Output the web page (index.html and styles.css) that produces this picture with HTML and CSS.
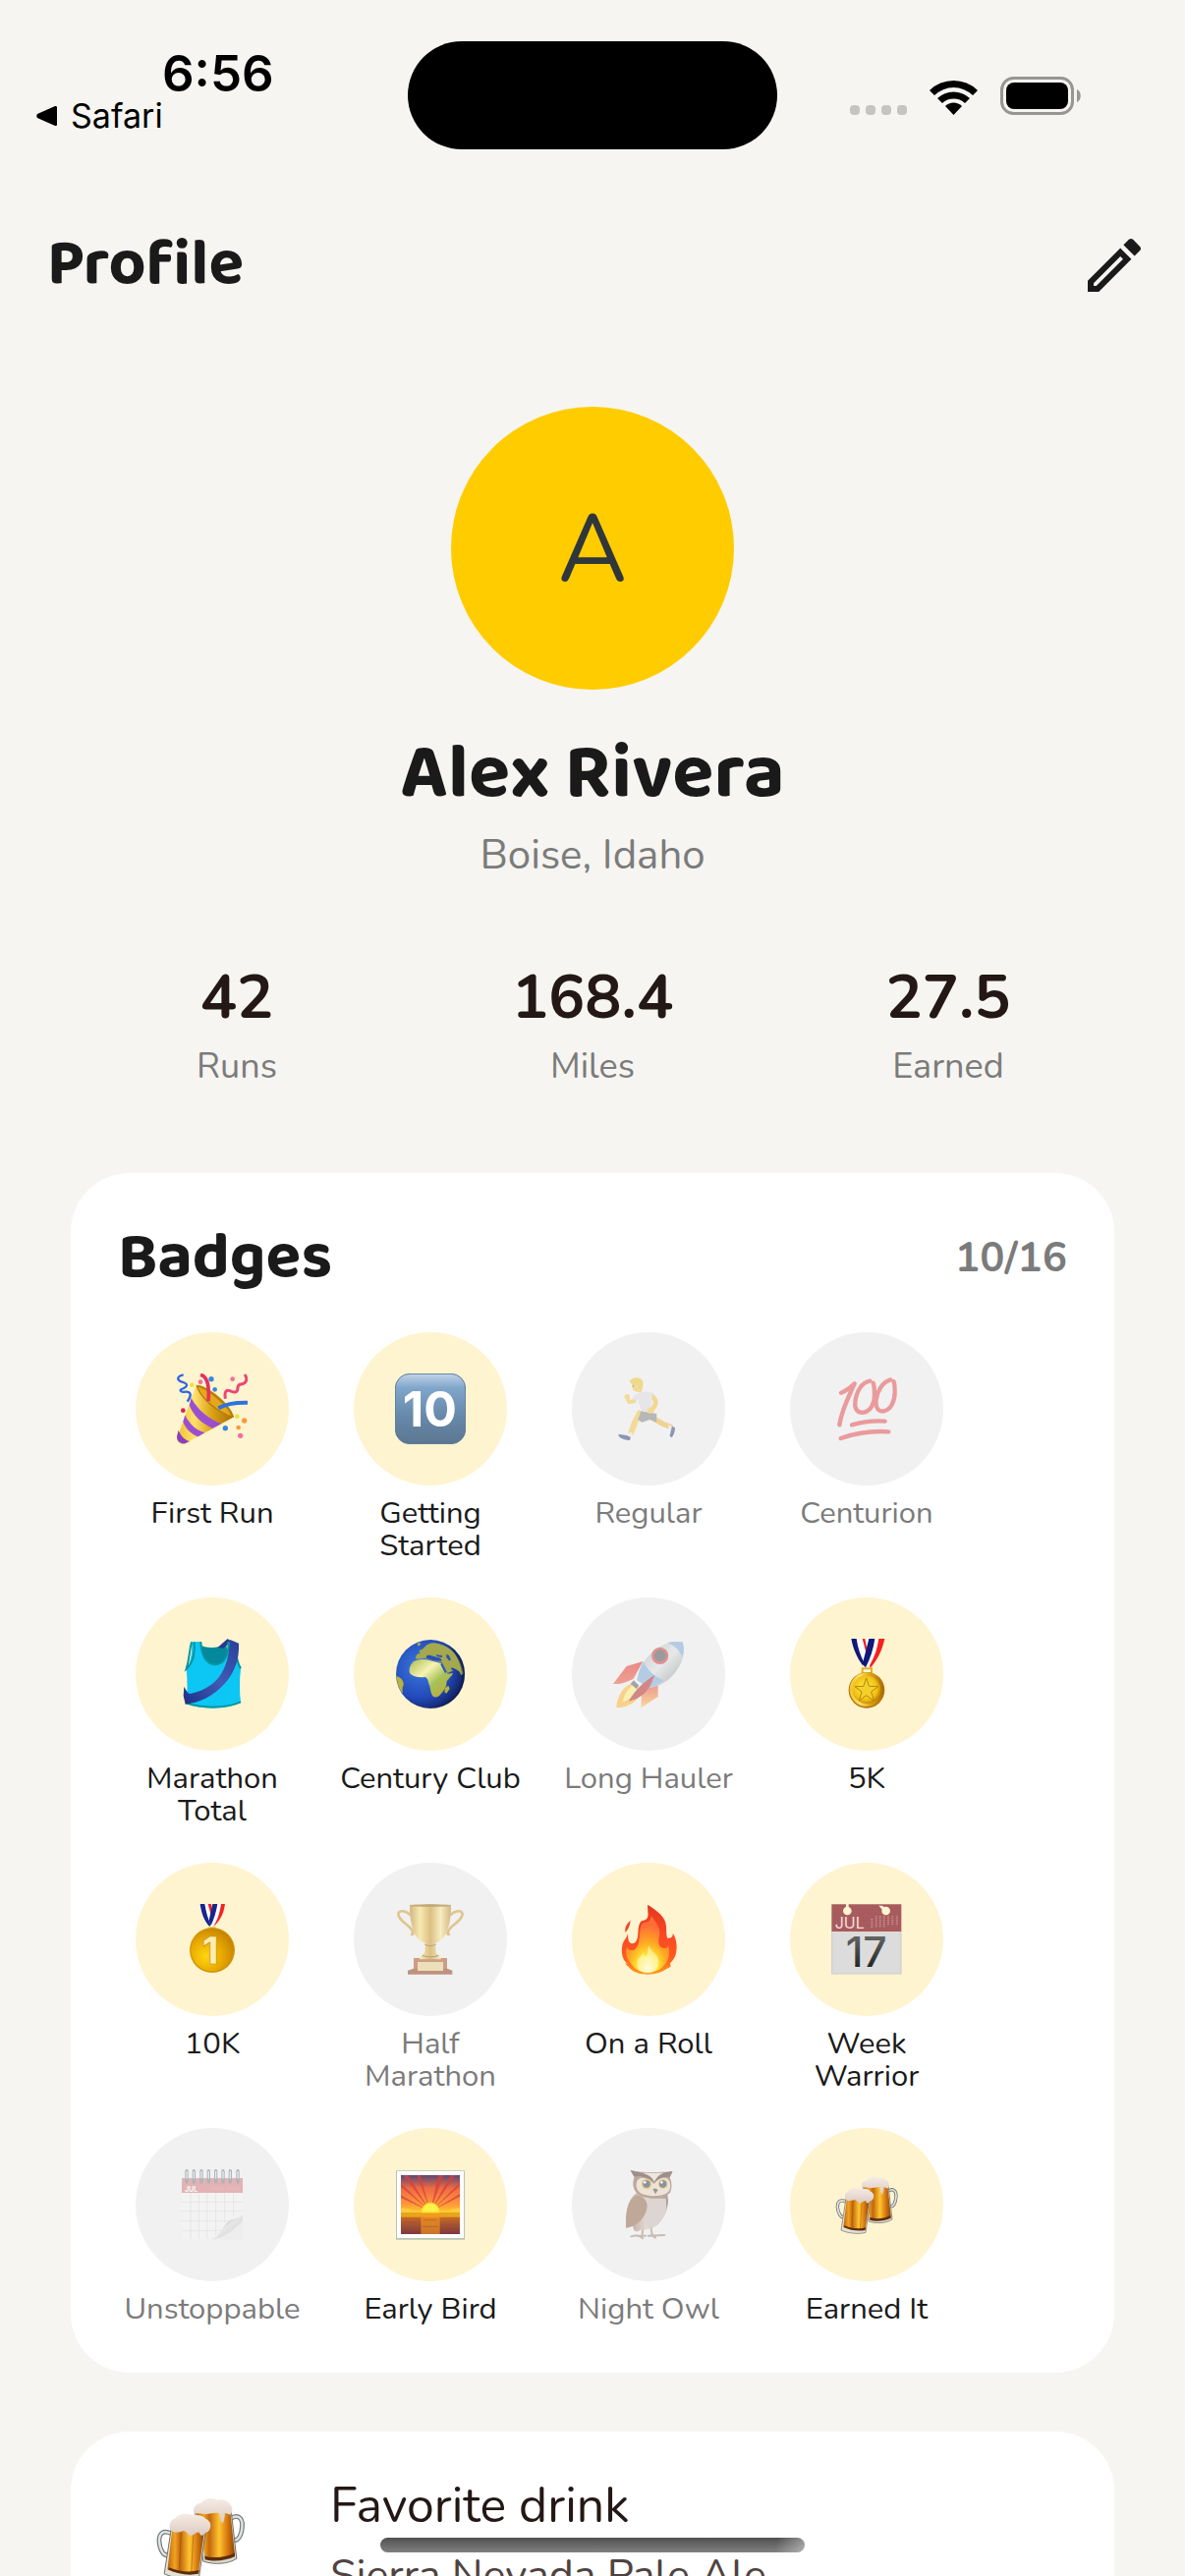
FILE: index.html
```html
<!DOCTYPE html>
<html lang="en">
<head>
<meta charset="utf-8">
<meta name="viewport" content="width=device-width, initial-scale=1">
<title>Profile</title>
<link rel="stylesheet" href="styles.css">
</head>
<body>
<svg class="sprite" width="0" height="0" aria-hidden="true">
  <defs>
    <linearGradient id="gold" x1="0" y1="0" x2="1" y2="0">
      <stop offset="0" stop-color="#f0c22c"/><stop offset=".3" stop-color="#ffe070"/><stop offset=".6" stop-color="#dca416"/><stop offset="1" stop-color="#a86c05"/>
    </linearGradient>
    <linearGradient id="cup" x1="0" y1="0" x2="1" y2="0">
      <stop offset="0" stop-color="#b8800d"/><stop offset=".25" stop-color="#ffe27a"/><stop offset=".5" stop-color="#c98f14"/><stop offset=".75" stop-color="#ffe893"/><stop offset="1" stop-color="#b57f12"/>
    </linearGradient>
    <linearGradient id="keycap" x1="0" y1="0" x2="0" y2="1">
      <stop offset="0" stop-color="#c0d4e8"/><stop offset=".2" stop-color="#80a6cb"/><stop offset=".6" stop-color="#6789aa"/><stop offset="1" stop-color="#5c7690"/>
    </linearGradient>
    <linearGradient id="beer" x1="0" y1="0" x2="1" y2="0">
      <stop offset="0" stop-color="#b86410"/><stop offset=".2" stop-color="#f2a41f"/><stop offset=".35" stop-color="#c3680e"/><stop offset=".6" stop-color="#ffc531"/><stop offset=".8" stop-color="#d97c10"/><stop offset="1" stop-color="#8e4507"/>
    </linearGradient>
    <linearGradient id="foam" x1="0" y1="0" x2="0" y2="1">
      <stop offset="0" stop-color="#f6ebe4"/><stop offset="1" stop-color="#dccbc1"/>
    </linearGradient>
    <radialGradient id="sea" cx=".35" cy=".4" r=".7">
      <stop offset="0" stop-color="#3c78e0"/><stop offset=".65" stop-color="#2249b8"/><stop offset="1" stop-color="#0d1a50"/>
    </radialGradient>
    <linearGradient id="land" x1="0" y1="0" x2="1" y2="1">
      <stop offset="0" stop-color="#a9bb4e"/><stop offset=".35" stop-color="#f7f4b4"/><stop offset=".6" stop-color="#a5c155"/><stop offset="1" stop-color="#c9a43a"/>
    </linearGradient>
    <radialGradient id="coin" cx=".35" cy=".65" r=".7">
      <stop offset="0" stop-color="#ffd60f"/><stop offset=".55" stop-color="#e9a900"/><stop offset="1" stop-color="#c58400"/>
    </radialGradient>
    <radialGradient id="star-coin" cx=".45" cy=".45" r=".6">
      <stop offset="0" stop-color="#fff04a"/><stop offset=".7" stop-color="#f0c213"/><stop offset="1" stop-color="#b97800"/>
    </radialGradient>
    <linearGradient id="flame" x1="0" y1="0" x2="0" y2="1">
      <stop offset="0" stop-color="#e5381c"/><stop offset=".5" stop-color="#fb4a26"/><stop offset=".75" stop-color="#ff5a1c"/><stop offset="1" stop-color="#ff9a20"/>
    </linearGradient>
    <radialGradient id="flame-core" cx=".5" cy=".92" r=".75">
      <stop offset="0" stop-color="#fffbd8"/><stop offset=".3" stop-color="#ffe92e"/><stop offset=".6" stop-color="#ffa824"/><stop offset="1" stop-color="#ff6c36"/>
    </radialGradient>
    <linearGradient id="sash" x1="0" y1="1" x2="1" y2="0">
      <stop offset="0" stop-color="#1e2f86"/><stop offset=".5" stop-color="#3f5bb5"/><stop offset="1" stop-color="#2a409b"/>
    </linearGradient>
    <linearGradient id="sky" x1="0" y1="0" x2="0" y2="1">
      <stop offset="0" stop-color="#5a4874"/><stop offset=".22" stop-color="#ee6a43"/><stop offset=".5" stop-color="#ff9a3a"/><stop offset=".62" stop-color="#ffc42a"/><stop offset=".66" stop-color="#d5721f"/><stop offset="1" stop-color="#7c3840"/>
    </linearGradient>
    <linearGradient id="hull" x1="0" y1="0" x2="1" y2="1">
      <stop offset="0" stop-color="#8f989d"/><stop offset=".5" stop-color="#dfe3e3"/><stop offset="1" stop-color="#6c7478"/>
    </linearGradient>
    <linearGradient id="fin" x1="0" y1="0" x2="0" y2="1">
      <stop offset="0" stop-color="#e5241f"/><stop offset=".6" stop-color="#ee5a3a"/><stop offset="1" stop-color="#ffc24a"/>
    </linearGradient>
    <linearGradient id="page-curl" x1="0" y1="0" x2="1" y2="1">
      <stop offset=".2" stop-color="#666"/><stop offset=".5" stop-color="#ddd"/><stop offset="1" stop-color="#aaa"/>
    </linearGradient>
    <linearGradient id="owl-body" x1="0" y1="0" x2="1" y2="0">
      <stop offset="0" stop-color="#7a5340"/><stop offset=".5" stop-color="#d9c6b8"/><stop offset="1" stop-color="#6d4a3a"/>
    </linearGradient>
    <linearGradient id="digit" x1="0" y1="0" x2="0" y2="1">
      <stop offset="0" stop-color="#777"/><stop offset="1" stop-color="#111"/>
    </linearGradient>
  </defs>
  <symbol id="beers" viewBox="891 171 216 216">
    <path d="M1064 238c14-10 26-3 25 16-1 18-8 34-20 30" fill="none" stroke="#737879" stroke-width="10"/>
    <path d="M1064 238c14-10 26-3 25 16-1 18-8 34-20 30" fill="none" stroke="#e0e4e4" stroke-width="5"/>
    <path d="M987 222l78-2 12 104c-18 12-48 14-72 6z" fill="#d9d7cf" stroke="#6e6a60" stroke-width="2"/>
    <path d="M989 222l74-2 10 94c-18 9-42 10-64 6z" fill="url(#beer)"/>
    <path d="M1008 318c20 6 46 4 65-6v8c-18 8-44 12-64 6z" fill="#5c2d08"/>
    <path d="M985 226c-4-14 6-20 16-22 8-12 26-12 34-6 14-3 24 2 28 10 6 4 6 12 2 20-7 2-8-2-13-2-1 8-2 20-6 22-5-2-4-14-7-22-10-2-20 2-28 2z" fill="url(#foam)"/>
    <path d="M936 270c-16-8-26-2-26 16 1 18 10 36 22 29" fill="none" stroke="#737879" stroke-width="10"/>
    <path d="M936 270c-16-8-26-2-26 16 1 18 10 36 22 29" fill="none" stroke="#e0e4e4" stroke-width="5"/>
    <path d="M936 260l74 6-14 98c-20 6-54 3-75-7z" fill="#e3e0d8" stroke="#6e6a60" stroke-width="2"/>
    <path d="M938 262l69 6-12 86c-19 6-48 2-67-6z" fill="url(#beer)"/>
    <path d="M958 268l-5 80M984 270l-5 86" stroke="#8e4507" stroke-width="2" opacity=".5"/>
    <path d="M930 348c20 10 44 13 65 9l1-8c-20 6-46 2-65-6z" fill="#5c2d08"/>
    <path d="M935 262c-6-10 0-22 10-25 8-12 30-11 38-6 14-2 24 2 28 8 10 4 12 14 8 22-4 8-10 6-12 10-5 6-9 4-11-4-8 0-12 8-18 8-6-2-8-10-16-11-10 4-22 6-27-2z" fill="url(#foam)"/>
  </symbol>
</svg>

<div class="app">
  <div class="status">
    <div class="status-left">
      <time class="clock">6:56</time>
      <a class="back" href="#">
        <svg class="back-arrow" viewBox="0 0 22 22" aria-hidden="true"><path d="M21 2v18c0 1-1 1-2 1L1 13c-1-1-1-3 0-4L19 1c1 0 2 0 2 1z"/></svg>
        Safari</a>
    </div>
    <div class="island"></div>
    <div class="status-right">
      <span class="dots"><i></i><i></i><i></i><i></i></span>
      <svg class="wifi" viewBox="0 0 51 37" aria-hidden="true">
        <path d="M1 12a35 35 0 0 1 49 0l-5 5a28 28 0 0 0-39 0z"/>
        <path d="M9 20a24 24 0 0 1 33 0l-5 5a17 17 0 0 0-23 0z"/>
        <path d="M17 28a12 12 0 0 1 17 0l-8.500 9z"/>
      </svg>
      <svg class="battery" viewBox="0 0 82 39" aria-hidden="true">
        <rect x="1.500" y="1.500" width="72" height="36" rx="12" fill="none" stroke="#979693" stroke-width="3"/>
        <rect x="6" y="6" width="63" height="27" rx="8"/>
        <path d="M78 13c5 2 5 11 0 13z" fill="#979693"/>
      </svg>
    </div>
  </div>

  <header class="appbar">
    <h1 class="title">Profile</h1>
    <button class="edit" type="button" aria-label="Edit profile">
      <svg viewBox="0 0 24 24" aria-hidden="true"><path d="M14.060 9.020l.92.92L5.920 19H5v-.92l9.060-9.060M17.660 3c-.25 0-.51.1-.7.29l-1.830 1.830 3.750 3.750 1.830-1.830c.39-.39.39-1.020 0-1.410l-2.340-2.340c-.2-.2-.45-.29-.71-.29zm-3.600 3.190L3 17.250V21h3.750L17.810 9.940l-3.750-3.750z"/></svg>
    </button>
  </header>

  <main class="content">
    <section class="person">
      <div class="avatar">A</div>
      <h2 class="name">Alex Rivera</h2>
      <p class="place">Boise, Idaho</p>
    </section>

    <dl class="stats">
      <div class="stat"><dd>42</dd><dt>Runs</dt></div>
      <div class="stat"><dd>168.4</dd><dt>Miles</dt></div>
      <div class="stat"><dd>27.5</dd><dt>Earned</dt></div>
    </dl>

    <section class="card badges">
      <div class="badges-head">
        <h2 class="title">Badges</h2>
        <span class="count">10/16</span>
      </div>
      <ul class="badge-list">
        <li class="badge">
          <div class="disc"><svg class="emoji" viewBox="243 171 216 216" aria-hidden="true">
            <path d="M302 206c28-2 96 48 115 98l-147 80c-14 6-26-2-26-16z" fill="url(#gold)"/>
            <path d="M302 206c30-2 106 58 115 98-40-2-110-60-115-98z" fill="#b87d0a"/>
            <path d="M308 212c26 6 92 58 100 88-36-12-92-56-100-88z" fill="#e3a91c"/>
            <path d="M287 246c18 34 54 66 92 78l-26 14c-34-12-62-42-72-70z" fill="#9a4fd0"/>
            <path d="M268 298c12 26 32 46 60 54l-20 12c-22-8-40-26-46-46z" fill="#9a4fd0"/>
            <path d="M248 344c6 16 18 30 34 34l-14 7c-14 2-26-8-25-22z" fill="#8a3fc0"/>
            <path d="M315 175c20 4 28 30 24 80" fill="none" stroke="#e5305e" stroke-width="11"/>
            <path d="M370 277c24-14 52-18 89-17" fill="none" stroke="#2f72df" stroke-width="12"/>
            <path d="M263 175c-20 4-22 16-4 22 20 6 18 14-2 22-8 4 0 10 12 8 20-2 18 14 6 30" fill="none" stroke="#2f66dd" stroke-width="7"/>
            <path d="M450 174c10 14 6 28-12 30-12 2-8 10-10 18-4 10-14 6-24 2-12-4-16 4-13 24" fill="none" stroke="#ec4674" stroke-width="9"/>
            <g fill="#3a86e0"><circle cx="348" cy="188" r="8"/><circle cx="359" cy="220" r="7"/><circle cx="391" cy="338" r="8"/></g>
            <g fill="#f0709c"><circle cx="315" cy="197" r="7"/><circle cx="413" cy="188" r="7"/><circle cx="437" cy="361" r="8"/></g>
            <g fill="#f2df3d"><circle cx="289" cy="206" r="7"/><circle cx="427" cy="302" r="7"/></g>
            <g fill="#f79a3c"><circle cx="449" cy="315" r="8"/><circle cx="431" cy="336" r="7"/></g>
            <circle cx="262" cy="284" r="7" fill="#d4284c"/>
          </svg></div>
          <span class="label">First Run</span>
        </li>
        <li class="badge">
          <div class="disc"><svg class="emoji" viewBox="909 171 216 216" aria-hidden="true">
            <rect x="910" y="172" width="214" height="214" rx="44" fill="url(#keycap)" stroke="#58789a" stroke-width="3"/>
            <text x="1015" y="332" text-anchor="middle" font-family="Inter, sans-serif" font-weight="700" font-size="150" fill="#fff">10</text>
          </svg></div>
          <span class="label">Getting<br>Started</span>
        </li>
        <li class="badge locked">
          <div class="disc"><svg class="emoji" viewBox="225 171 216 216" aria-hidden="true">
            <path d="M340 236c12 12 18 20 14 30l-14 22" fill="none" stroke="#f3bd33" stroke-width="14" stroke-linecap="round"/>
            <path d="M306 292l-16 32-10 28" fill="none" stroke="#f5c440" stroke-width="18" stroke-linecap="round"/>
            <path d="M344 306l34 20 22 8" fill="none" stroke="#efb43a" stroke-width="16" stroke-linecap="round"/>
            <path d="M242 356l24 4 13 4-3 11c-12 0-26-4-34-12zM403 332l11 4c0 12-4 24-10 31-6-4-8-8-4-14z" fill="#2c3b7d"/>
            <path d="M272 352l12 0-2 14-12-4zM394 328l10 4-2 14-8-6z" fill="#eee"/>
            <path d="M310 286l48 8-1 26-20-8-24 8-12-8z" fill="#7e7e7e"/>
            <path d="M290 238c14-12 36-14 56-10l-8 60-26-4c-2-12-10-22-10-34l-14 10-8-8z" fill="#dcdce2"/>
            <path d="M290 256l-16 2-8-16" fill="none" stroke="#f5c440" stroke-width="11" stroke-linecap="round"/>
            <circle cx="268" cy="242" r="8" fill="#f5c440"/><circle cx="338" cy="284" r="9" fill="#f5c440"/>
            <path d="M282 202c0 14 4 24 14 25l16 2 2-30-26-8z" fill="#f6c743"/>
            <path d="M276 196c2-14 32-18 39-2 3 10 0 20-2 28-8 0-10-6-10-16-12 4-24-2-27-10z" fill="#edc02a"/>
            <circle cx="287" cy="210" r="2" fill="#432"/>
          </svg></div>
          <span class="label">Regular</span>
        </li>
        <li class="badge locked">
          <div class="disc"><svg class="emoji" viewBox="891 171 216 216" aria-hidden="true">
            <g fill="none" stroke="#e5464a" stroke-width="13" stroke-linecap="round" stroke-linejoin="round">
              <path d="M921 230c16-6 28-16 41-28-20 44-40 82-46 126"/>
              <path d="M1009 194c-26 4-42 34-45 64-3 22 8 34 26 32 22-4 33-28 33-54 0-20-2-30-4-36"/>
              <path d="M1072 190c-24 6-40 34-44 62-2 24 6 36 22 34 24-4 35-32 35-58 0-16-1-26-3-32"/>
              <path d="M954 328c34-10 66-14 101-11"/>
              <path d="M920 369c46-16 92-24 146-20"/>
            </g>
          </svg></div>
          <span class="label">Centurion</span>
        </li>

        <li class="badge">
          <div class="disc"><svg class="emoji" viewBox="243 171 216 216" aria-hidden="true">
            <path d="M312 190c20 10 56 12 82-4l8 76h-90z" fill="#04889c"/>
            <path d="M398 171l-30 26 16 4 24-22z" fill="#253a92"/>
            <path d="M288 181l28-1c2 40 14 66 44 68 30 0 42-30 40-66h24c-2 32 0 58 14 80-4 36-4 72 0 104-44 22-118 22-164 4 0-38 2-70-2-106 14-22 18-52 16-83z" fill="#0cc6f4"/>
            <path d="M288 181c-8 30-6 50-16 82 20-18 28-50 24-82M316 180c2 40 14 68 44 70 30 0 42-34 40-70M272 368c52 16 120 16 166-4M424 200c0 30 4 46 14 62" fill="none" stroke="#06959f" stroke-width="6"/>
            <path d="M404 173l28 12c2 46-10 84-42 122-34 38-76 60-121 64l-6-26 2-28c6 10 10 20 18 22 34-6 66-22 88-50 24-34 32-66 33-116z" fill="url(#sash)"/>
          </svg></div>
          <span class="label">Marathon<br>Total</span>
        </li>
        <li class="badge">
          <div class="disc"><svg class="emoji" viewBox="909 171 216 216" aria-hidden="true">
            <circle cx="1017" cy="279" r="105" fill="url(#sea)"/>
            <path d="M1000 196c10-14 28-14 42-10 40 10 66 40 76 92l-8 4c-2-12-10-14-20-20-14-8-12 4-2 6l-18 8-18-32-32-6-20-8c-8 0-14 4-28 2 0-10 4-16 14-16l-4-8 12-6zM976 186l8-4 4 6-8 6z" fill="#a3a94c"/>
            <path d="M966 240c16-8 34-8 50-2l34 8 20 32 16-2c-4 12-18 18-20 30 2 12-8 22-16 32-6 10-18 16-26 8-8-14-6-26-12-38-2-10-4-16-10-20-20 2-38 0-48-12-4-14 2-26 12-36z" fill="url(#land)"/>
            <path d="M1006 222c12-4 20 4 42 8l4 10-26-2-22-8zM1052 246l14 28-4 2-14-26zM1034 220l18 2 2 6-16-2zM1066 218l8 4 6 14-6 2-8-10z" fill="#2a50b8"/>
            <path d="M1072 314l4 10-10 14-6-4 2-12zM914 286c14 4 22 14 21 26-4 8-4 16-2 26-12-12-18-34-19-52z" fill="#b9b23c"/>
            <path d="M1074 192c34 22 48 50 48 87 0 60-46 105-105 105 60-10 98-52 96-100 0-34-18-66-39-92z" fill="#0a1238" opacity=".35"/>
          </svg></div>
          <span class="label">Century Club</span>
        </li>
        <li class="badge locked">
          <div class="disc"><svg class="emoji" viewBox="225 171 216 216" aria-hidden="true">
            <path d="M284 306c-26 10-46 34-49 76 34-2 66-16 76-50z" fill="#ffb52a"/>
            <path d="M288 312c-18 10-28 26-34 52 24-8 36-20 46-44z" fill="#fff07a"/>
            <path d="M316 240l-50 15-41 54c26 2 46-8 62-16zM362 310l0 38-52 34 2-40 14-26z" fill="url(#fin)"/>
            <path d="M437 181c8 22 4 54-16 84-22 34-54 54-90 56l-32-24c6-38 26-70 54-92 26-20 56-28 84-24z" fill="url(#hull)"/>
            <path d="M437 181c5 14 5 30-1 46-8-20-24-36-46-44 16-4 32-4 47-2zM318 240c10 26 34 48 62 58-16 14-34 22-50 23l-32-24c4-22 10-40 20-57z" fill="#76a8d8"/>
            <path d="M288 298l16 16-8 10-18-16z" fill="#555b60"/>
            <path d="M352 282c-30 18-58 42-80 80 36-8 62-30 74-66z" fill="#b52020"/>
            <circle cx="368" cy="223" r="22" fill="#42484c" stroke="#d33030" stroke-width="8"/>
          </svg></div>
          <span class="label">Long Hauler</span>
        </li>
        <li class="badge">
          <div class="disc"><svg class="emoji" viewBox="891 171 216 216" aria-hidden="true">
            <path d="M980 171h44l-10 50-12 16z" fill="#fff"/>
            <path d="M980 171h14l10 50-6 16z" fill="#e22"/>
            <path d="M952 171h34l22 84-18-4c-16-22-30-50-38-80z" fill="#fff"/>
            <path d="M952 171h16c4 28 12 52 24 74l-6 6c-16-22-28-48-34-80z" fill="#10187a"/>
            <path d="M1008 171h46c-8 38-22 64-42 90h-22c-2-10 8-56 18-90z" fill="#fff"/>
            <path d="M1006 171h18c-4 30-14 60-28 88l-10-10z" fill="#10187a"/>
            <path d="M1036 171h18c-8 38-22 64-44 90l-2-8c14-24 24-52 28-82z" fill="#f5221c"/>
            <path d="M986 276v-14h28v14" fill="none" stroke="#e8ae1c" stroke-width="6"/>
            <circle cx="999" cy="328" r="55" fill="#b87404"/>
            <circle cx="999" cy="326" r="52" fill="url(#gold)"/>
            <circle cx="999" cy="326" r="43" fill="url(#star-coin)"/>
            <path d="M998 291l9 25 27 1-21 16 8 27-23-16-22 16 8-27-21-16 26-1z" fill="#f5cf2a" stroke="#b5850a" stroke-width="3"/>
          </svg></div>
          <span class="label">5K</span>
        </li>

        <li class="badge">
          <div class="disc"><svg class="emoji" viewBox="243 171 216 216" aria-hidden="true">
            <path d="M336 171h30l-12 56-6 4z" fill="#fff"/><path d="M336 171h12l6 32-6 12z" fill="#e22"/>
            <path d="M314 171h24l12 46-2 24-12-6c-12-18-18-38-22-64z" fill="#fff"/>
            <path d="M314 171h14c4 24 10 46 18 62l-2 8c-18-18-26-42-30-70z" fill="#17258c"/>
            <path d="M354 171h36c-4 32-18 54-36 70h-10z" fill="#fff"/>
            <path d="M352 171h15c-4 24-10 44-20 66l-6-16z" fill="#17258c"/>
            <path d="M378 171h12c-4 32-18 54-36 70 14-22 20-44 24-70z" fill="#f5221c"/>
            <path d="M340 240h22v8h-22z" fill="#f3d26b"/>
            <circle cx="351" cy="312" r="69" fill="#d39404"/>
            <circle cx="351" cy="311" r="65" fill="url(#coin)"/>
            <text x="345" y="354" text-anchor="middle" font-family="Inter, sans-serif" font-weight="800" font-size="116" fill="#ffedaf" stroke="#c58a08" stroke-width="2">1</text>
          </svg></div>
          <span class="label">10K</span>
        </li>
        <li class="badge locked">
          <div class="disc"><svg class="emoji" viewBox="909 171 216 216" aria-hidden="true">
            <path d="M958 206c-16-16-38-18-39-4 2 22 36 34 42 50 6 10 4 14-4 10M1076 206c16-16 38-18 39-4-2 22-36 34-42 50-6 10-4 14 4 10" fill="none" stroke="#cf9a2e" stroke-width="8"/>
            <path d="M966 336h102v34h-102z" fill="#ad4c1e"/>
            <path d="M948 374l18-6h102l16 6v12h-136z" fill="#8c3510"/>
            <path d="M978 348h78v27h-78z" fill="#e9ce83"/>
            <path d="M954 174c40-4 86-4 126 0 0 56-12 108-48 116l2 28c2 10 14 10 16 22h-66c2-12 14-12 16-22l2-28c-36-8-48-60-48-116z" fill="url(#cup)"/>
            <ellipse cx="1017" cy="176" rx="62" ry="4" fill="#946312"/>
            <path d="M1000 294c10 6 24 6 34 0M992 328c16 6 34 6 50 0" fill="none" stroke="#8c6112" stroke-width="4"/>
          </svg></div>
          <span class="label">Half<br>Marathon</span>
        </li>
        <li class="badge">
          <div class="disc"><svg class="emoji" viewBox="225 171 216 216" aria-hidden="true">
            <path d="M278 221c-2 14-4 24-16 37-2-12 2-26 16-37z" fill="#f0492c"/>
            <path d="M330 173c30 18 56 38 57 66 1 18 0 28 4 36 10 2 18-4 16-15 12 16 14 42 10 60-2 14-10 24-18 32l2 10-14 8c-26 20-82 22-106 2l-16-16-4-4 8 2c-16-14-20-34-16-56 2-14 12-20 17-36 0 16 2 30 14 30 18-2 16-28 18-46 2-14 6-22 12-24 12-2 20-8 17-26z" fill="url(#flame)"/>
            <path d="M341 206c14 20 26 34 26 54-2 18-8 36 6 44 8 4 18 4 20-8 8 26 2 44-12 62-24 30-76 28-96 2-16-18-26-34-18-58 4 10 16 14 26 6 18-16 8-54 20-76 8-10 26 2 28-26z" fill="url(#flame-core)"/>
            <path d="M334 298c10 26 24 20 30 46 2 18-12 38-32 38-22 0-36-12-34-32 2-16 14-16 18-32 4 10 6 12 10 12 8-6 2-18 8-32z" fill="#fffce0" opacity=".55"/>
          </svg></div>
          <span class="label">On a Roll</span>
        </li>
        <li class="badge">
          <div class="disc"><svg class="emoji" viewBox="891 171 216 216" aria-hidden="true">
            <path d="M892 172h213v84h-213z" fill="#a85b5d"/>
            <path d="M892 256h213v129h-213z" fill="#dcdcdc"/>
            <path d="M893 256v128h211v-128" fill="none" stroke="#c9c3bb" stroke-width="2"/>
            <g fill="#fff4d0"><circle cx="940" cy="192" r="13"/><circle cx="1058" cy="192" r="13"/><path d="M936 171h8v12h-8zM1036 176h10l12 8-6 10z"/></g>
            <text x="902" y="245" font-family="Inter, sans-serif" font-size="48" fill="#f4dede">JUL</text>
            <g stroke="#cf9c9d" stroke-width="5" stroke-dasharray="3 3"><path d="M1015 216v28M1028 208v36M1040 208v36M1052 208v36M1065 208v28M1078 208v28M1091 208v30"/></g>
            <text x="998" y="364" text-anchor="middle" font-family="Inter, sans-serif" font-weight="500" font-size="128" fill="url(#digit)">17</text>
          </svg></div>
          <span class="label">Week<br>Warrior</span>
        </li>

        <li class="badge locked">
          <div class="disc"><svg class="emoji" viewBox="243 171 216 216" aria-hidden="true">
            <path d="M258 242h186v68c-40 8-50 64-96 76h-90z" fill="#f6f6f6"/>
            <path d="M258 271h186M258 299h186M258 329h150M258 358h120M285 244v140M310 244v140M335 244v140M362 244v130M389 244v90M416 244v70" stroke="#dcdcdc" stroke-width="3"/>
            <path d="M258 198h186v45h-186z" fill="#d5757b"/>
            <text x="267" y="239" font-family="Inter, sans-serif" font-weight="700" font-size="21" fill="#fff">JUL</text>
            <path d="M348 230h40M398 230h40" stroke="#e08a8e" stroke-width="12" stroke-dasharray="3 4"/>
            <path d="M444 308c-10 16-32 10-46 24-18 20-26 44-50 54 44-2 70-36 96-56z" fill="url(#page-curl)"/>
            <path d="M444 330v56h-74c28-12 50-34 74-56z" fill="#eaeaea"/>
            <path d="M273 176v34M295 176v34M318 176v34M340 176v34M362 176v34M384 176v34M406 176v34M429 176v34" stroke="#6d7880" stroke-width="10" stroke-linecap="round"/>
            <path d="M273 178v20M295 178v20M318 178v20M340 178v20M362 178v20M384 178v20M406 178v20M429 178v20" stroke="#dfe6ea" stroke-width="4" stroke-linecap="round"/>
          </svg></div>
          <span class="label">Unstoppable</span>
        </li>
        <li class="badge">
          <div class="disc"><svg class="emoji" viewBox="909 171 216 216" aria-hidden="true">
            <path d="M912 175h210v211h-210z" fill="#b7c4b2"/>
            <path d="M915 177h204v204h-204z" fill="#fff"/>
            <path d="M927 189h180v180h-180z" fill="url(#sky)"/>
            <path d="M1017 300L935 189h14zM1017 300L976 189h10zM1017 300l24-111h16zM1017 300l62-111h14zM1017 300l90-88v10zM1017 300l90-54v8zM1017 300l-90-86v10zM1017 300l-90-50v8z" fill="#d8403c" opacity=".75"/>
            <path d="M927 294c6-8 12-6 16-2 6-4 12 0 14 6h120c2-8 10-8 14-4 4-6 10-4 16-4v18H927z" fill="#ffcb3d"/>
            <path d="M927 303h180v14h-180z" fill="#e8a41c"/>
            <path d="M988 303h58v66h-58z" fill="#f5961e" opacity=".65"/>
            <path d="M990 303a27 29 0 0 1 55 0z" fill="#fff04a" stroke="#ffd51e" stroke-width="3"/>
            <path d="M935 332h50M1052 340h48M940 354h38M1054 358h40M996 326h40M992 346h48" stroke="#a34c35" stroke-width="2" opacity=".7"/>
          </svg></div>
          <span class="label">Early Bird</span>
        </li>
        <li class="badge locked">
          <div class="disc"><svg class="emoji" viewBox="225 171 216 216" aria-hidden="true">
            <path d="M316 346l-2 26M340 346l4 26M280 376c18-6 28-2 36 6M304 374h20M332 374l50-2M344 374l10 6" fill="none" stroke="#a38a76" stroke-width="6" stroke-linecap="round"/>
            <path d="M296 244c-28 22-34 60-31 106l20-6 4 14c8 6 14 2 20-2 40 4 66-22 80-64 6-22 4-34 0-50z" fill="url(#owl-body)"/>
            <path d="M330 262c-8 34-8 62 0 88 32-4 52-26 58-60l-2-30z" fill="#c8bbb4"/>
            <path d="M296 250c-28 22-34 60-31 100l20-6c24-12 42-34 44-60 0-18-14-32-33-34z" fill="#8f6241"/>
            <path d="M278 174c24 6 42 6 66 6 22 0 42 0 62-2-2 10-6 14-8 18 6 14 8 30 2 44-14 26-90 26-106 0-10-16-10-30-4-46-6-6-8-12-12-20z" fill="#8b5f49"/>
            <path d="M296 214c4-22 30-24 54 2 20-26 44-22 48-6 4 20 0 28-12 36-26 10-60 8-78-2-10-8-14-18-12-30z" fill="#e9d9bf"/>
            <path d="M316 182h62l-28 26z" fill="#e9dccf"/>
            <path d="M278 174c30 8 64 10 72 36-16-14-48-22-60-16zM406 177c-26 2-48 12-54 33 14-14 36-18 44-14z" fill="#4d3026"/>
            <circle cx="327" cy="216" r="16" fill="#e0a93c"/><circle cx="377" cy="216" r="15" fill="#e0a93c"/>
            <circle cx="327" cy="216" r="11" fill="#243745"/><circle cx="377" cy="216" r="11" fill="#243745"/>
            <circle cx="322" cy="211" r="4" fill="#fff"/><circle cx="373" cy="211" r="4" fill="#fff"/>
            <path d="M346 232c4-4 12-4 16 2l-8 13z" fill="#4c4340"/>
          </svg></div>
          <span class="label">Night Owl</span>
        </li>
        <li class="badge">
          <div class="disc"><svg class="emoji" aria-hidden="true"><use href="#beers"/></svg></div>
          <span class="label">Earned It</span>
        </li>
      </ul>
    </section>

    <section class="card favorite">
      <div class="favorite-icon"><svg aria-hidden="true"><use href="#beers"/></svg></div>
      <div class="favorite-text">
        <h3>Favorite drink</h3>
        <p>Sierra Nevada Pale Ale</p>
      </div>
    </section>
  </main>
  <div class="home-indicator"></div>
</div>
</body>
</html>
```
FILE: styles.css
```css
* { box-sizing: border-box; }

body, h1, h2, h3, p, dl, dd, dt, ul { margin: 0; padding: 0; }

body {
  background: #f6f5f1;
  color: #1a1a1a;
  font-family: Nunito, "Noto Sans", sans-serif;
  font-weight: 400;
}

.sprite { position: absolute; }

.app {
  height: 100vh;
  display: flex;
  flex-direction: column;
  overflow: hidden;
}

/* Status bar */
.status {
  flex: none;
  height: 186px;
  display: grid;
  grid-template-columns: 1fr auto 1fr;
  align-items: start;
  padding: 42px 36px 0;
  font-family: Inter, sans-serif;
  color: #000;
}

.status-left {
  display: flex;
  flex-direction: column;
  align-items: flex-start;
  padding-top: 4px;
}

.clock {
  padding-left: 129px;
  font-size: 51px;
  font-weight: 600;
  line-height: 58px;
}

.back {
  display: flex;
  align-items: center;
  gap: 12px;
  color: #000;
  font-size: 34px;
  font-weight: 400;
  line-height: 28px;
  text-decoration: none;
}

.back-arrow { width: 24px; height: 22px; }

.island {
  width: 376px;
  height: 110px;
  border-radius: 55px;
  background: #000;
}

.status-right {
  display: flex;
  justify-content: flex-end;
  align-items: flex-end;
  gap: 22px;
  padding: 36px 70px 0 0;
}

.dots { display: flex; gap: 6px; }
.dots i { width: 10px; height: 10px; border-radius: 4px; background: #c5c4c1; }
.wifi { width: 51px; height: 37px; }
.battery { width: 82px; height: 39px; }

/* App bar */
.appbar {
  flex: none;
  height: 168px;
  display: flex;
  align-items: center;
  justify-content: space-between;
  padding: 0 36px 0 48px;
}

.title {
  font-family: "Baloo 2", "Noto Sans", sans-serif;
  font-size: 66px;
  font-weight: 700;
  line-height: 78px;
}

.edit {
  width: 72px;
  height: 72px;
  padding: 0;
  border: 0;
  background: none;
}

.edit svg { display: block; fill: #1a1a1a; }

/* Scrolling content */
.content {
  flex: 1;
  min-height: 0;
  overflow-y: auto;
  scrollbar-width: none;
  padding: 60px 72px;
}

.person {
  display: flex;
  flex-direction: column;
  align-items: center;
}

.avatar {
  width: 288px;
  height: 288px;
  border-radius: 50%;
  background: #ffcc00;
  color: #30373b;
  font-size: 96px;
  line-height: 292px;
  text-align: center;
}

.name {
  margin-top: 42px;
  font-family: "Baloo 2", "Noto Sans", sans-serif;
  font-size: 78px;
  font-weight: 700;
  line-height: 90px;
}

.place {
  margin-top: 10px;
  color: #7b7b7b;
  font-size: 42px;
  line-height: 54px;
}

.stats {
  display: grid;
  grid-template-columns: repeat(3, 1fr);
  margin: 82px -12px 84px;
  text-align: center;
}

.stat { display: grid; gap: 10px; }

.stat dd {
  color: #231815;
  font-size: 62px;
  font-weight: 700;
  line-height: 72px;
}

.stat dt {
  color: #7b7b7b;
  font-size: 36px;
  line-height: 48px;
}

.card {
  background: #fff;
  border-radius: 60px;
}

.badges { padding: 48px; }

.badges-head {
  display: flex;
  align-items: center;
  justify-content: space-between;
  margin-bottom: 36px;
}

.count {
  color: #7b7b7b;
  font-size: 42px;
  font-weight: 700;
  line-height: 54px;
}

.badge-list {
  display: flex;
  flex-wrap: wrap;
  gap: 36px 30px;
  list-style: none;
}

.badge {
  width: 192px;
  display: flex;
  flex-direction: column;
  align-items: center;
  gap: 12px;
}

.disc {
  width: 156px;
  height: 156px;
  display: grid;
  place-items: center;
  border-radius: 50%;
  background: #fff4d0;
}

.emoji { width: 72px; height: 72px; }

.label {
  font-size: 31px;
  line-height: 33px;
  text-align: center;
  white-space: nowrap;
}

.locked .disc { background: #f1f1f1; }
.locked .emoji { opacity: .5; }
.locked .label { color: #7b7b7b; }

.favorite {
  display: flex;
  align-items: center;
  gap: 48px;
  margin-top: 60px;
  padding: 40px 48px;
}

.favorite-icon {
  width: 168px;
  display: flex;
  justify-content: center;
}

.favorite-icon svg { width: 102px; height: 102px; }

.favorite-text { display: grid; gap: 4px; }

.favorite-text h3 {
  color: #231815;
  font-size: 50px;
  font-weight: 400;
  line-height: 72px;
}

.favorite-text p {
  color: #4f4341;
  font-size: 43px;
  line-height: 60px;
}

/* Overlays the scrolling content */
.home-indicator {
  position: fixed;
  bottom: 24px;
  left: 50%;
  width: 432px;
  height: 15px;
  margin-left: -216px;
  border-radius: 8px;
  background: linear-gradient(100deg, transparent 93%, rgba(255, 255, 255, .4)), linear-gradient(#505050, #808080);
}
```
